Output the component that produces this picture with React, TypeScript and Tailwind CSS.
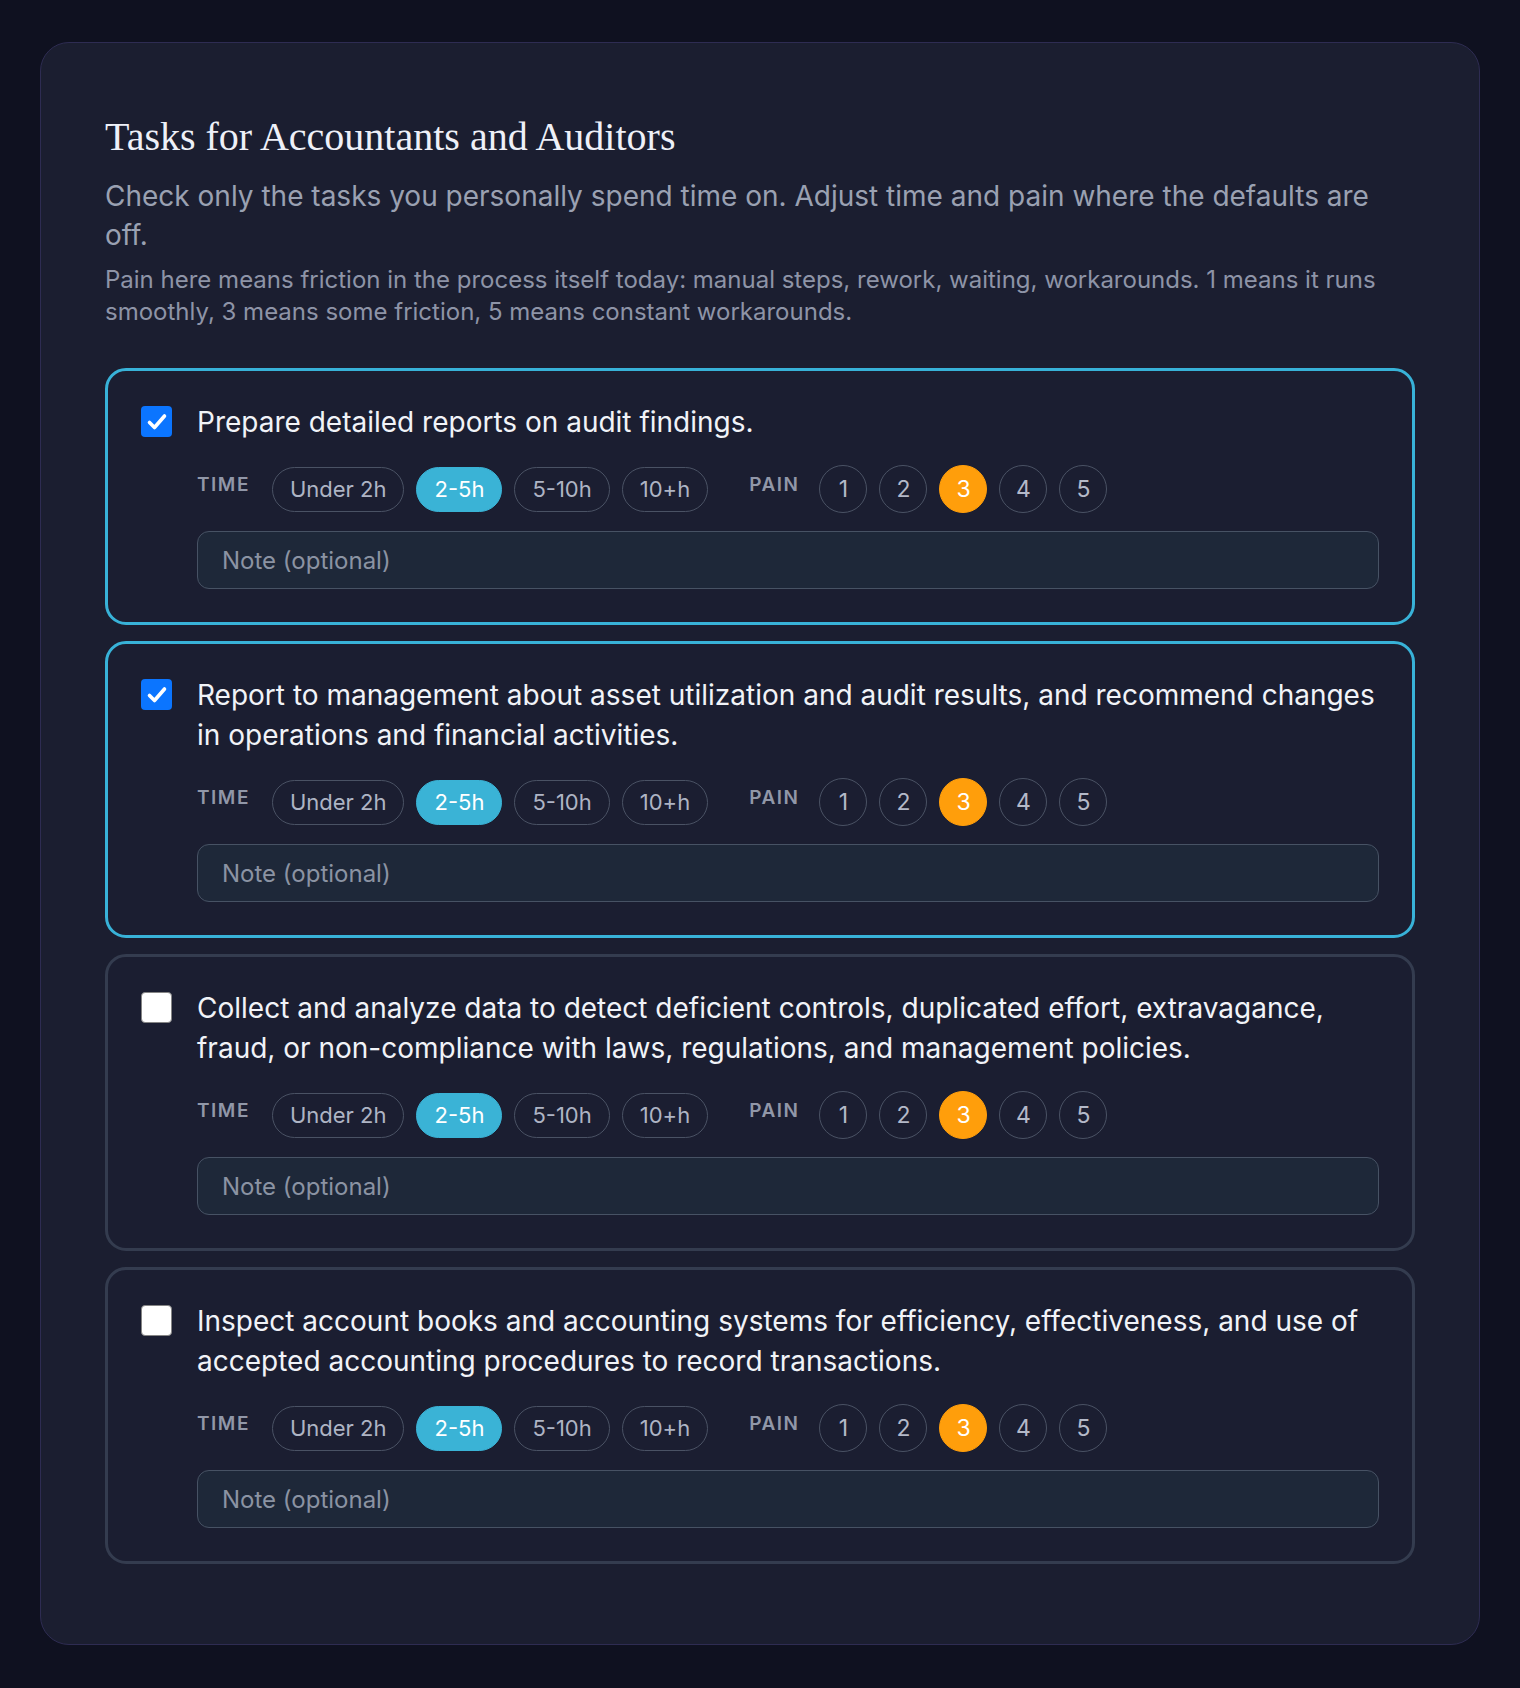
import { useState } from 'react';

const TIMES = ['Under 2h', '2-5h', '5-10h', '10+h'];
const PAINS = [1, 2, 3, 4, 5];

const TASKS = [
  { id: 1, text: 'Prepare detailed reports on audit findings.', checked: true },
  {
    id: 2,
    text: 'Report to management about asset utilization and audit results, and recommend changes in operations and financial activities.',
    checked: true,
  },
  {
    id: 3,
    text: 'Collect and analyze data to detect deficient controls, duplicated effort, extravagance, fraud, or non-compliance with laws, regulations, and management policies.',
    checked: false,
  },
  {
    id: 4,
    text: 'Inspect account books and accounting systems for efficiency, effectiveness, and use of accepted accounting procedures to record transactions.',
    checked: false,
  },
];

function CheckBox({ checked, onToggle }: { checked: boolean; onToggle: () => void }) {
  if (checked) {
    return (
      <button
        onClick={onToggle}
        className="w-[31px] h-[31px] shrink-0 rounded-[4px] bg-[#0b75ff] flex items-center justify-center mt-[4px]"
      >
        <svg viewBox="0 0 24 24" className="w-[24px] h-[24px]" fill="none">
          <path d="M4.5 12.5l5 5L19.5 6" stroke="white" strokeWidth="3.6" strokeLinecap="round" strokeLinejoin="round" />
        </svg>
      </button>
    );
  }
  return (
    <button
      onClick={onToggle}
      className="w-[31px] h-[31px] shrink-0 rounded-[4px] bg-white border-[1.5px] border-[#858585] mt-[4px]"
    />
  );
}

function TaskCard({ text, initial }: { text: string; initial: boolean }) {
  const [checked, setChecked] = useState(initial);
  const [time, setTime] = useState('2-5h');
  const [pain, setPain] = useState(3);

  return (
    <div
      className={
        'mb-[16px] rounded-[21px] border-[3px] bg-[#1b1e31] px-[33px] pt-[31px] pb-[33px] flex gap-[25px] ' +
        (checked ? 'border-[#38b2d8]' : 'border-[#343c4f]')
      }
    >
      <CheckBox checked={checked} onToggle={() => setChecked(!checked)} />
      <div className="flex-1 min-w-0">
        <p className="text-[28px] leading-[40px] text-[#f1f3f8]">{text}</p>

        <div className="mt-[23px] flex items-center gap-[41px]">
          {/* time buckets */}
          <div className="flex items-center gap-[12px]">
            <span className="mr-[10px] mb-[8px] text-[19px] font-semibold tracking-[0.08em] text-[#9197a8]">TIME</span>
            {TIMES.map((t) => (
              <button
                key={t}
                onClick={() => setTime(t)}
                className={
                  'h-[45px] px-[17px] rounded-full text-[22px] leading-none border-[1.5px] ' +
                  (time === t
                    ? 'bg-[#3ab3d6] border-[#3ab3d6] text-white'
                    : 'border-[#4a5264] text-[#aeb4c4]')
                }
              >
                {t}
              </button>
            ))}
          </div>

          {/* pain scale */}
          <div className="flex items-center gap-[12px]">
            <span className="mr-[8px] mb-[8px] text-[19px] font-semibold tracking-[0.08em] text-[#9197a8]">PAIN</span>
            {PAINS.map((n) => (
              <button
                key={n}
                onClick={() => setPain(n)}
                className={
                  'w-[48px] h-[48px] rounded-full flex items-center justify-center text-[23px] leading-none border-[1.5px] ' +
                  (pain === n
                    ? 'bg-[#ff9e0b] border-[#ff9e0b] text-white'
                    : 'border-[#4a5264] text-[#b4b9c8]')
                }
              >
                {n}
              </button>
            ))}
          </div>
        </div>

        <input
          placeholder="Note (optional)"
          className="mt-[18px] w-full h-[58px] rounded-[12px] bg-[#1e2839] border-[1.5px] border-[#475264] px-[24px] text-[24px] text-[#e5e7eb] placeholder:text-[#8b93a3] outline-none"
        />
      </div>
    </div>
  );
}

export default function App() {
  return (
    <div className="min-h-screen bg-[#0f1120] px-[40px] pt-[42px] pb-[41px]" style={{ fontFamily: 'Inter, "Noto Sans", sans-serif' }}>
      <div className="rounded-[29px] border-[1.5px] border-[#2e2c52] bg-[#1b1e30] px-[64px] pt-[64px] pb-[64px]">
        <h1
          className="text-[40px] leading-[60px] text-[#eef0f8]"
          style={{ fontFamily: '"Liberation Serif", serif' }}
        >
          Tasks for Accountants and Auditors
        </h1>
        <p className="mt-[10px] text-[28px] leading-[39px] text-[#9aa1b2]">
          Check only the tasks you personally spend time on. Adjust time and pain where the defaults are off.
        </p>
        <p className="mt-[9px] text-[24px] leading-[32px] text-[#8e94a7]">
          Pain here means friction in the process itself today: manual steps, rework, waiting, workarounds. 1 means it
          runs smoothly, 3 means some friction, 5 means constant workarounds.
        </p>

        <div className="mt-[40px]">
          {TASKS.map((t) => (
            <TaskCard key={t.id} text={t.text} initial={t.checked} />
          ))}
        </div>
      </div>
    </div>
  );
}
